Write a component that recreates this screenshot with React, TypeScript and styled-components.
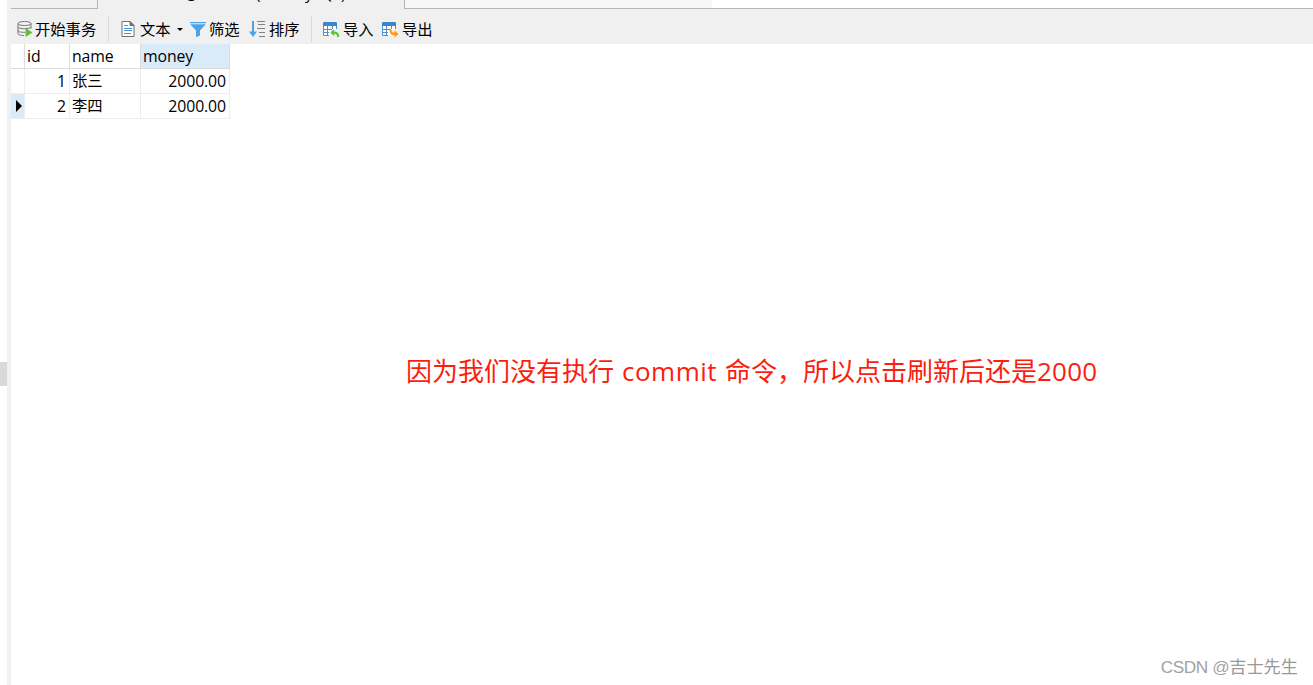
import React from "react";
import styled, { createGlobalStyle } from "styled-components";

const GlobalStyle = createGlobalStyle`
  * { box-sizing: border-box; }
  body { margin: 0; background: #fff; }
`;

const Window = styled.div`
  display: flex;
  width: 1313px;
  height: 685px;
  overflow: hidden;
  background: #fff;
  color: #000;
  font: 15.3px "Open Sans", "Noto Sans CJK SC", sans-serif;
`;

const Gutter = styled.div`
  display: flex;
  align-items: flex-start;
  flex: none;
  width: 11px;
  border-right: 4px solid #f0f0f0;
  padding-top: 362px;
`;

const GutterHandle = styled.div`
  width: 7px;
  height: 24px;
  background: #d9d9d9;
`;

const Main = styled.main`
  display: flex;
  flex-direction: column;
  flex: 1;
  min-width: 0;
`;

const TabStrip = styled.div`
  display: flex;
  flex: none;
  height: 9px;
  background: #f0f0f0;
`;

const Tab = styled.div<{ $width: number; $active?: boolean; $tone?: string }>`
  display: flex;
  align-items: flex-end;
  flex: none;
  width: ${(p) => p.$width}px;
  height: 9px;
  overflow: hidden;
  background: ${(p) => p.$tone ?? "#f0f0f0"};
  border-bottom: ${(p) => (p.$active ? "none" : "1px solid #b5b5b5")};
  border-left: ${(p) => (p.$active ? "1px solid #b5b5b5" : "none")};
  border-right: ${(p) => (p.$active ? "1px solid #b5b5b5" : "none")};
`;

const TabTitle = styled.span`
  padding-left: 26px;
  line-height: 20px;
  margin-bottom: 6px;
  white-space: pre;
`;

const AtSign = styled.span`
  line-height: 1;
  vertical-align: -1px;
`;

const TabSpace = styled.div`
  flex: 1;
  background: #fff;
  border-bottom: 1px solid #b5b5b5;
`;

const Toolbar = styled.div`
  display: flex;
  align-items: center;
  flex: none;
  height: 35px;
  padding: 6px 0 1px 6px;
  background: #f0f0f0;
`;

const ToolButton = styled.div<{ $width: number; $gap?: number }>`
  display: flex;
  align-items: center;
  flex: none;
  gap: ${(p) => p.$gap ?? 3}px;
  width: ${(p) => p.$width}px;
  height: 24px;
  line-height: 24px;
  white-space: nowrap;
  svg { flex: none; display: block; }
`;

const Divider = styled.div<{ $after: number }>`
  width: 1px;
  height: 26px;
  margin-right: ${(p) => p.$after}px;
  background: #dadada;
`;

const Caret = styled.span`
  margin: 1px 0 0 1px;
  border: 3px solid transparent;
  border-top-color: #000;
  border-bottom: 0;
`;

const Grid = styled.div`
  display: grid;
  grid-template-columns: 14px 45px 71px 89px;
  grid-auto-rows: 25px;
  width: 219px;
`;

const Cell = styled.div<{ $head?: boolean; $on?: boolean; $right?: boolean; $cjk?: boolean }>`
  display: flex;
  align-items: center;
  justify-content: ${(p) => (p.$right ? "flex-end" : "flex-start")};
  padding: ${(p) => (p.$cjk ? "0 3px 1px 2px" : "1px 3px 0 2px")};
  font-size: ${(p) => (p.$cjk ? 15.3 : 15.8)}px;
  line-height: 23px;
  letter-spacing: ${(p) => (p.$cjk ? 0 : -0.1)}px;
  background: ${(p) => (p.$on ? "#d9eaf8" : "#fff")};
  border-right: 1px solid ${(p) => (p.$head ? "#dcdcdc" : "#ededed")};
  border-bottom: 1px solid ${(p) => (p.$head ? "#dcdcdc" : "#ededed")};
`;

const RowMarker = styled.span`
  margin: -1px 0 0 3px;
  border: 6px solid transparent;
  border-left-color: #000;
  border-right: 0;
`;

const Canvas = styled.section`
  display: flex;
  flex: 1;
  flex-direction: column;
  justify-content: space-between;
`;

const Note = styled.p`
  display: flex;
  margin: 232px 0 0 395px;
  color: #fc1d0e;
  font-size: 26px;
  line-height: 40px;
  white-space: pre;
`;

const Run = styled.span<{ $width: number; $track?: number }>`
  width: ${(p) => p.$width}px;
  letter-spacing: ${(p) => p.$track ?? 0}px;
`;

const Watermark = styled.div`
  align-self: flex-end;
  padding-right: 15px;
  margin-bottom: 5px;
  color: #999;
  font: 17.2px/26px "Liberation Sans", "Noto Sans CJK SC", sans-serif;
  white-space: nowrap;
`;

const Handle = styled.span`
  color: #a2a2a2;
  letter-spacing: -0.4px;
`;

const TransactionIcon = () => (
  <svg width="16" height="18" viewBox="0 0 16 18" fill="none" stroke="#777">
    <path d="M1 3.5v10.2c0 1 2.5 1.8 6 1.8M1 3.5C1 .8 14 .8 14 3.5S1 6.2 1 3.5ZM14 3.5v5M1 7c0 2.2 13 2.2 13 0M1 10.5c0 1.4 3.5 2 7 1.8" />
    <path d="M8.5 8v9l7-4.5Z" fill="#5ec232" stroke="none" />
  </svg>
);

const TextIcon = () => (
  <svg width="14" height="18" viewBox="0 0 14 18" fill="none">
    <path d="M1 1.5h8l4 4v11H1Z" fill="#fff" stroke="#707070" />
    <path d="M9 1.5v4h4Z" fill="#707070" stroke="#707070" />
    <path d="M3 5.5h4M3 8.5h8M3 10.5h8M3 13.5h7" stroke="#4399dc" />
  </svg>
);

const FilterIcon = () => (
  <svg width="16" height="17" viewBox="0 0 16 17" fill="#4da3e5">
    <path d="M0 1h16v1.2H0ZM.3 3.3h15.4L10 9.5v5L6 16.3V9.5Z" />
  </svg>
);

const SortIcon = () => (
  <svg width="17" height="18" viewBox="0 0 17 18" fill="none">
    <path d="M4 1v12" stroke="#4da3e5" strokeWidth="2" />
    <path d="M0 11.5h8L4 17Z" fill="#4da3e5" />
    <path d="M8 1.5h8M9 4.5h7M8 8.5h8M10 12.5h6M10 16.5h6" stroke="#808080" />
  </svg>
);

const TableIcon = ({ out }: { out?: boolean }) => (
  <svg width="17" height="17" viewBox="0 0 17 17" fill="none">
    <path d="M0 5V2.2Q0 1 1.2 1h11.6Q14 1 14 2.2V5Z" fill="#3b86c6" />
    <path d="M1 5h12v4H8v5H1Z" fill="#fff" />
    <path d="M.5 5v9.5H6M4.5 5v9.5M9.5 5v3M13.5 5v3M1 8.5h8M1 11.5h5" stroke="#4b91cc" />
    {out ? (
      <path d="M7.5 9h2c.2 2 1 2.7 3 2.7V9.3l4 3.7-4 3.5v-2.4c-3.6 0-5-1.8-5-5.1Z" fill="#ff9b12" />
    ) : (
      <path d="M7.2 11.5 11.2 8v2.4c3.8.1 5 2.2 5 5.6h-2c-.2-2.2-.9-3.3-3-3.3V15Z" fill="#5ec232" />
    )}
  </svg>
);

const rows = [
  { id: 1, name: "张三", money: "2000.00" },
  { id: 2, name: "李四", money: "2000.00" },
];

export default function App() {
  const current = 2;
  return (
    <Window>
      <GlobalStyle />
      <Gutter><GutterHandle /></Gutter>
      <Main>
        <TabStrip>
          <Tab $width={86} />
          <Tab $width={308} $active>
            <TabTitle>account <AtSign>@</AtSign>itheima (test MySQL)</TabTitle>
          </Tab>
          <Tab $width={307} $tone="#f7f7f7" />
          <TabSpace />
        </TabStrip>
        <Toolbar>
          <ToolButton $width={91} $gap={2}><TransactionIcon />开始事务</ToolButton>
          <Divider $after={12} />
          <ToolButton $width={69} $gap={5}><TextIcon />文本<Caret /></ToolButton>
          <ToolButton $width={59}><FilterIcon />筛选</ToolButton>
          <ToolButton $width={62}><SortIcon />排序</ToolButton>
          <Divider $after={11} />
          <ToolButton $width={59}><TableIcon />导入</ToolButton>
          <ToolButton $width={52}><TableIcon out />导出</ToolButton>
        </Toolbar>
        <Grid>
          <Cell $head />
          <Cell $head>id</Cell>
          <Cell $head>name</Cell>
          <Cell $head $on>money</Cell>
          {rows.map((row) => (
            <React.Fragment key={row.id}>
              <Cell $on={row.id === current}>{row.id === current && <RowMarker />}</Cell>
              <Cell $right>{row.id}</Cell>
              <Cell $cjk>{row.name}</Cell>
              <Cell $right>{row.money}</Cell>
            </React.Fragment>
          ))}
        </Grid>
        <Canvas>
          <Note>
            <Run $width={216}>因为我们没有执行</Run>
            <Run $width={103} $track={0.5}>commit</Run>
            <Run $width={312}>命令，所以点击刷新后还是</Run>
            <Run $width={70} $track={0.25}>2000</Run>
          </Note>
          <Watermark><Handle>CSDN @</Handle>吉士先生</Watermark>
        </Canvas>
      </Main>
    </Window>
  );
}
